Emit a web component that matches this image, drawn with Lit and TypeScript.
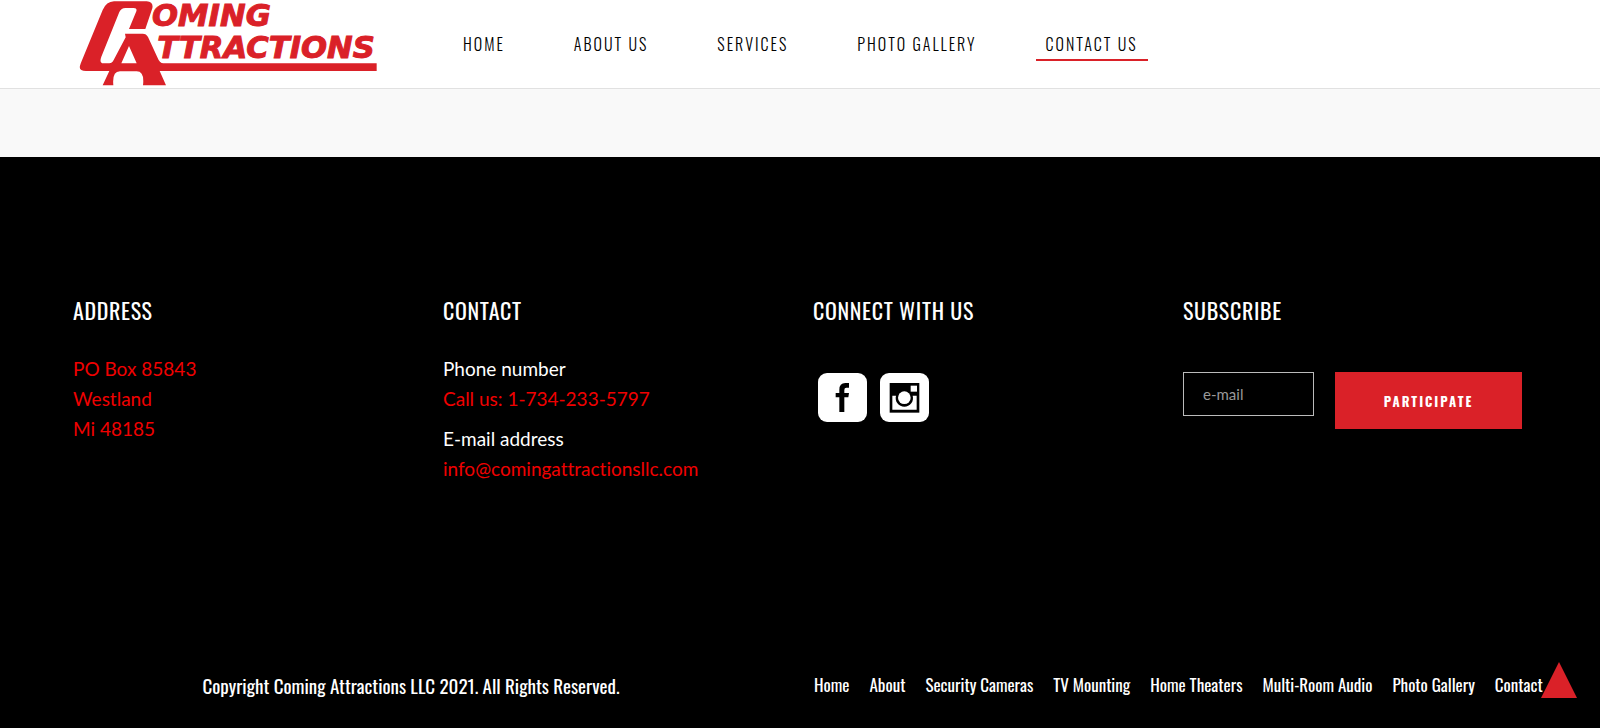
import { LitElement, html, css } from "lit";
import { customElement, state } from "lit/decorators.js";
import { classMap } from "lit/directives/class-map.js";

@customElement("site-logo")
class SiteLogo extends LitElement {
  static styles = css`
    :host { display: block; }
    svg { display: block; width: 299px; height: 86px; overflow: visible; }
    .mark { fill: #da2128; fill-rule: evenodd; }
    .word {
      fill: #da2128;
      stroke: #da2128;
      stroke-width: 3px;
      font: italic 700 92px "DejaVu Sans", sans-serif;
    }
  `;

  render() {
    return html`
      <svg viewBox="15 0 897 258" role="img" aria-label="Coming Attractions">
        <path
          class="mark"
          d="M120 4 H218 Q239 5 235 25 L214 87 H165 L187 34 Q190 24 179 24 H154 Q142 24 136 36
             L82 170 Q75 190 88 190 H106 Q114 190 119 180 L155 112 L153 101 H206 Q217 101 222 111
             L250 172 Q257 190 268 190 H908 V213 H257 L276 256 H207 Q212 214 188 214 H138
             Q114 214 118 256 H86 L106 213 H36 Q14 213 18 197 Q20 190 24 181 L86 30 Q97 5 120 4 Z
             M165 138 L142 190 H188 Z"
        />
        <text class="word" x="234" y="77">OMING</text>
        <text class="word" x="250" y="175">TTRACTIONS</text>
      </svg>
    `;
  }
}

@customElement("app-root")
class AppRoot extends LitElement {
  static styles = css`
    :host {
      display: block;
      min-height: 100vh;
      background: #000;
      color: #fff;
      font-family: Lato, sans-serif;
      font-size: 19px;
      line-height: 30px;
      font-variant-ligatures: none;
    }
    * { box-sizing: border-box; }
    a { text-decoration: none; }
    ul { list-style: none; margin: 0; padding: 0; }
    p { margin: 0 0 10px; }

    .header {
      display: flex;
      align-items: flex-start;
      gap: 75px;
      height: 89px;
      padding: 0 79px;
      background: #fff;
      border-bottom: 1px solid #e1e1e1;
    }
    .nav { display: flex; gap: 49px; padding-top: 29px; }
    .nav a {
      display: block;
      padding: 0 10px;
      border-bottom: 2px solid transparent;
      color: #000;
      font-family: Oswald, sans-serif;
      font-weight: 300;
      font-size: 16px;
      line-height: 30px;
      letter-spacing: 2px;
      text-transform: uppercase;
    }
    .nav a.current { border-color: #da2128; }

    .band { height: 68px; background: #f9f9f9; }

    .columns {
      display: grid;
      grid-template-columns: repeat(4, 1fr);
      padding: 140px 47px 0 73px;
    }
    h2 {
      margin: 0 0 31px;
      font-family: Oswald, sans-serif;
      font-weight: 400;
      font-size: 22px;
      line-height: 26px;
      letter-spacing: 0.03em;
      text-transform: uppercase;
    }
    .red { color: #f00000; }
    .social { display: flex; gap: 13px; padding: 19px 5px; }
    .social a, .social svg { display: block; width: 49px; height: 49px; }

    .form { display: flex; align-items: flex-start; gap: 21px; padding-top: 18px; }
    .form input {
      width: 131px;
      height: 44px;
      padding: 0 19px;
      border: 1px solid #bbb;
      border-radius: 0;
      background: #000;
      color: #fff;
      font: 400 15px Lato, sans-serif;
    }
    .form input::placeholder { color: #999; opacity: 1; }
    .form button {
      width: 187px;
      height: 57px;
      padding: 0;
      border: 0;
      background: #da2128;
      color: #fff;
      font: 700 13px Oswald, sans-serif;
      letter-spacing: 2px;
      text-transform: uppercase;
    }

    .bottom {
      display: grid;
      grid-template-columns: 1fr 1fr;
      gap: 12px;
      padding: 176px 4px 28px 20px;
      font-family: Oswald, sans-serif;
    }
    .copyright { margin: 0; text-align: center; font-size: 19px; }
    .links { display: flex; gap: 20px; font-size: 17px; white-space: nowrap; }
    .links a { color: #fff; }

    .top {
      position: fixed;
      right: 23px;
      bottom: 30px;
      width: 36px;
      height: 36px;
      background: #da2128;
      clip-path: polygon(50% 0, 100% 100%, 0 100%);
    }
  `;

  @state() private current = "Contact Us";

  private pages = ["Home", "About Us", "Services", "Photo Gallery", "Contact Us"];
  private footerLinks = [
    "Home", "About", "Security Cameras", "TV Mounting",
    "Home Theaters", "Multi-Room Audio", "Photo Gallery", "Contact",
  ];

  render() {
    return html`
      <header class="header">
        <a href="#" aria-label="Coming Attractions"><site-logo></site-logo></a>
        <nav aria-label="Main">
          <ul class="nav">
            ${this.pages.map((page) => html`
              <li>
                <a href="#" class=${classMap({ current: page === this.current })}
                  @click=${() => (this.current = page)}>${page}</a>
              </li>`)}
          </ul>
        </nav>
      </header>
      <main class="band"></main>
      <footer>
        <div class="columns">
          <section>
            <h2>Address</h2>
            <p class="red">PO Box 85843<br />Westland<br />Mi 48185</p>
          </section>
          <section>
            <h2>Contact</h2>
            <p>Phone number<br /><a class="red" href="tel:1-734-233-5797">Call us: 1-734-233-5797</a></p>
            <p>E-mail address<br /><a class="red" href="mailto:info@comingattractionsllc.com">info@comingattractionsllc.com</a></p>
          </section>
          <section>
            <h2>Connect with us</h2>
            <div class="social">
              <a href="#" aria-label="Facebook">
                <svg viewBox="0 0 147 147">
                  <rect width="147" height="147" rx="27" fill="#fff" />
                  <path d="M64 117 V73 H53 V60 H64 V50 Q64 30 82 30 H93 V44 H85 Q79 44 79 51 V60 H93 L91 73 H79 V117 Z" fill="#000" />
                </svg>
              </a>
              <a href="#" aria-label="Instagram">
                <svg viewBox="0 0 147 147">
                  <rect width="147" height="147" rx="27" fill="#fff" />
                  <path d="M29 30 H118 V119 H29 Z" fill="#000" />
                  <path d="M92 38 H111 V56 H92 Z" fill="#fff" />
                  <path d="M37 68 H48 A26 26 0 1 0 98 68 H110 V110 H37 Z" fill="#fff" />
                  <circle cx="73" cy="74" r="19" fill="#fff" />
                </svg>
              </a>
            </div>
          </section>
          <section>
            <h2>Subscribe</h2>
            <form class="form" @submit=${(e: Event) => e.preventDefault()}>
              <input type="email" placeholder="e-mail" aria-label="e-mail" />
              <button type="submit">Participate</button>
            </form>
          </section>
        </div>
        <div class="bottom">
          <p class="copyright">Copyright Coming Attractions LLC 2021. All Rights Reserved.</p>
          <ul class="links">
            ${this.footerLinks.map((link) => html`<li><a href="#">${link}</a></li>`)}
          </ul>
        </div>
      </footer>
      <a class="top" href="#" aria-label="Back to top"></a>
    `;
  }
}
